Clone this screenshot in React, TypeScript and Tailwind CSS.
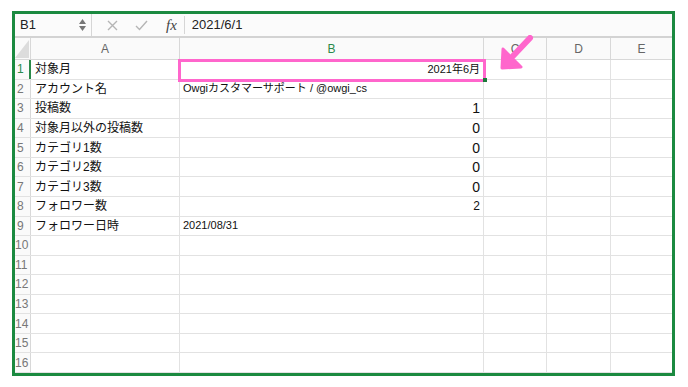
import React from "react";

const rows: { label: string; value: string; align: "left" | "right"; size: string }[] = [
  { label: "対象月", value: "2021年6月", align: "right", size: "text-[11px]" },
  { label: "アカウント名", value: "Owgiカスタマーサポート / @owgi_cs", align: "left", size: "text-[11px]" },
  { label: "投稿数", value: "1", align: "right", size: "text-[14px]" },
  { label: "対象月以外の投稿数", value: "0", align: "right", size: "text-[14px]" },
  { label: "カテゴリ1数", value: "0", align: "right", size: "text-[14px]" },
  { label: "カテゴリ2数", value: "0", align: "right", size: "text-[14px]" },
  { label: "カテゴリ3数", value: "0", align: "right", size: "text-[14px]" },
  { label: "フォロワー数", value: "2", align: "right", size: "text-[12px]" },
  { label: "フォロワー日時", value: "2021/08/31", align: "left", size: "text-[11px]" },
];

const font = "font-['Liberation_Sans','Noto_Sans_CJK_JP',sans-serif]";
const cols = "grid grid-cols-[16px_149px_304px_63px_64px_61px]";

export default function App() {
  const all = [...rows];
  while (all.length < 16) all.push({ label: "", value: "", align: "left", size: "text-[12px]" });

  return (
    <div className={`w-[688px] h-[387px] bg-white pt-[11px] pl-[12px] ${font}`}>
      <div className="relative w-[663px] h-[365px] border-[3px] border-[#1b8a40] flex flex-col overflow-hidden bg-white">
        {/* Formula bar */}
        <div className="h-[22px] shrink-0 flex items-center bg-[#fbfbfb] border-b-2 border-[#d3d3d3] box-content">
          <div className="w-[77px] h-full flex items-center justify-between pl-[5px] pr-[5px] border-r border-[#d6d6d6]">
            <span className="text-[13px] text-[#222]">B1</span>
            <div className="flex flex-col items-center gap-[2px]">
              <svg width="7" height="5" viewBox="0 0 7 5"><path d="M3.5 0 L7 5 L0 5 Z" fill="#777" /></svg>
              <svg width="7" height="5" viewBox="0 0 7 5"><path d="M0 0 L7 0 L3.5 5 Z" fill="#777" /></svg>
            </div>
          </div>
          <div className="flex items-center h-full">
            <svg className="ml-[15px]" width="11" height="11" viewBox="0 0 11 11">
              <path d="M1 1 L10 10 M10 1 L1 10" stroke="#b5b5b5" strokeWidth="1.4" />
            </svg>
            <svg className="ml-[17px]" width="13" height="11" viewBox="0 0 13 11">
              <path d="M1 6 L4.5 9.5 L12 1" stroke="#b5b5b5" strokeWidth="1.4" fill="none" />
            </svg>
            <span className="ml-[18px] text-[15px] italic text-[#444] font-['Liberation_Serif',serif]">fx</span>
            <div className="ml-[7px] w-px h-[18px] bg-[#d6d6d6]" />
            <span className="ml-[7px] text-[13px] text-[#222]">2021/6/1</span>
          </div>
        </div>

        {/* Column headers */}
        <div className={`${cols} h-[22px] shrink-0 bg-[#fafafa] border-b border-[#d8d8d8] text-[12px] text-[#666]`}>
          <div className="relative border-r border-[#d8d8d8]">
            <svg className="absolute right-[1px] bottom-[1px]" width="14" height="18" viewBox="0 0 14 18">
              <path d="M14 0 L14 18 L0 18 Z" fill="#dcdcdc" />
            </svg>
          </div>
          <div className="flex items-center justify-center border-r border-[#d8d8d8]">A</div>
          <div className="flex items-center justify-center border-r border-[#d8d8d8] text-[#2a8a4a]">B</div>
          <div className="flex items-center justify-center border-r border-[#d8d8d8]">C</div>
          <div className="flex items-center justify-center border-r border-[#d8d8d8]">D</div>
          <div className="flex items-center justify-center">E</div>
        </div>

        {/* Rows */}
        <div className="relative flex-1 min-h-0 grid grid-rows-[repeat(16,minmax(0,1fr))]">
          {all.map((r, i) => (
            <div key={i} className={`${cols} border-b border-[#e2e2e2] min-h-0 overflow-hidden leading-none`}>
              <div
                className={`flex items-center bg-[#fafafa] text-[12px] ${
                  i === 0 ? "text-[#2a8a4a] border-r-2 border-[#2a8a4a]" : "text-[#777] border-r border-[#d8d8d8]"
                } ${i >= 9 ? "pl-0" : "pl-[2px]"}`}
              >
                {i + 1}
              </div>
              <div className="flex items-center pl-[4px] text-[12px] text-[#111] border-r border-[#e2e2e2] whitespace-nowrap overflow-hidden">
                {r.label}
              </div>
              <div
                className={`flex items-center ${r.align === "right" ? "justify-end pr-[3px]" : "pl-[3px]"} ${r.size} text-[#111] border-r border-[#e2e2e2] whitespace-nowrap overflow-hidden`}
              >
                {r.value}
              </div>
              <div className="border-r border-[#e2e2e2]" />
              <div className="border-r border-[#e2e2e2]" />
              <div />
            </div>
          ))}

          {/* Selection highlight on B1 */}
          <div className="absolute left-[163px] top-[-1px] w-[308px] h-[23px] border-[3px] border-[#ff66cc]" />
          <div className="absolute left-[468px] top-[18px] w-[4px] h-[4px] bg-[#1b7a3a]" />
        </div>

        {/* Pointer arrow */}
        <svg className="absolute left-[482px] top-[21px]" width="40" height="40" viewBox="0 0 40 40">
          <path d="M33 3 L16 21" stroke="#ff66cc" strokeWidth="6" strokeLinecap="round" />
          <path d="M5 33 L6 14 L24 32 Z" fill="#ff66cc" stroke="#ff66cc" strokeWidth="3" strokeLinejoin="round" />
        </svg>
      </div>
    </div>
  );
}
